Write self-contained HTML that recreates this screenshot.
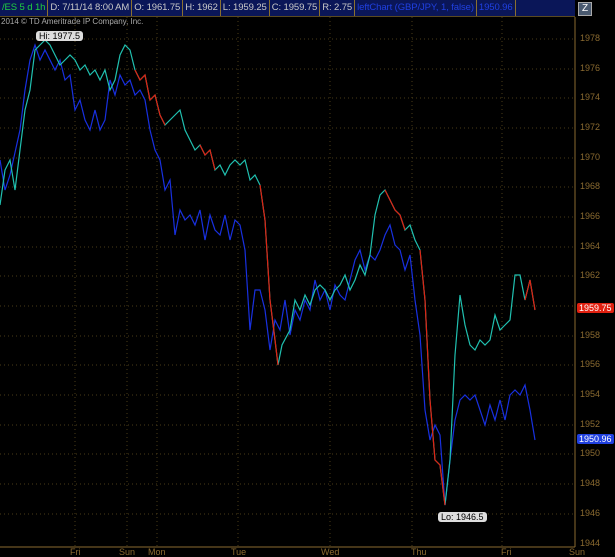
<!DOCTYPE html><html><head><style>
body{margin:0;width:615px;height:557px;background:#000;overflow:hidden;font-family:"Liberation Sans",sans-serif;position:relative}
.hdr{position:absolute;left:0;top:0;width:575px;height:16px;background:#0a1658;border-bottom:1px solid #5a4a20;font-size:9.5px;line-height:16px;color:#c8c8c8;white-space:nowrap;letter-spacing:-0.1px}
.hdr span{display:inline-block;padding:0 2px;border-right:1px solid #8a7030}
.ax{position:absolute;color:#8a6a30;font-size:9px}
</style></head><body>
<div class="hdr"><span style="color:#20d040">/ES 5 d 1h</span><span>D: 7/11/14 8:00 AM</span><span>O: 1961.75</span><span>H: 1962</span><span>L: 1959.25</span><span>C: 1959.75</span><span>R: 2.75</span><span style="color:#2040e0">leftChart (GBP/JPY, 1, false)</span><span style="color:#2040e0">1950.96</span></div>
<div style="position:absolute;left:578px;top:2px;width:12px;height:12px;background:#4a5a70;border:1px solid #aaa;color:#fff;font-size:10px;line-height:12px;text-align:center">Z</div>
<div style="position:absolute;left:1px;top:17px;font-size:8px;color:#aaa">2014 © TD Ameritrade IP Company, Inc.</div>
<svg width="615" height="557" style="position:absolute;left:0;top:0">
<g stroke="#4a3c18" stroke-dasharray="1,3" stroke-width="1">
<line x1="0" y1="39" x2="575" y2="39"/><line x1="0" y1="69" x2="575" y2="69"/><line x1="0" y1="98" x2="575" y2="98"/><line x1="0" y1="128" x2="575" y2="128"/><line x1="0" y1="158" x2="575" y2="158"/><line x1="0" y1="187" x2="575" y2="187"/><line x1="0" y1="217" x2="575" y2="217"/><line x1="0" y1="247" x2="575" y2="247"/><line x1="0" y1="276" x2="575" y2="276"/><line x1="0" y1="306" x2="575" y2="306"/><line x1="0" y1="336" x2="575" y2="336"/><line x1="0" y1="365" x2="575" y2="365"/><line x1="0" y1="395" x2="575" y2="395"/><line x1="0" y1="425" x2="575" y2="425"/><line x1="0" y1="454" x2="575" y2="454"/><line x1="0" y1="484" x2="575" y2="484"/><line x1="0" y1="514" x2="575" y2="514"/>
<line x1="75" y1="17" x2="75" y2="546"/><line x1="127" y1="17" x2="127" y2="546"/><line x1="157" y1="17" x2="157" y2="546"/><line x1="238" y1="17" x2="238" y2="546"/><line x1="330" y1="17" x2="330" y2="546"/><line x1="412" y1="17" x2="412" y2="546"/><line x1="502" y1="17" x2="502" y2="546"/>
</g>
<line x1="575" y1="17" x2="575" y2="547" stroke="#8a6a30"/>
<line x1="0" y1="547" x2="575" y2="547" stroke="#8a6a30"/>
<polyline fill="none" stroke="#1830e0" stroke-width="1.2" points="0,160 5,190 10,175 20,130 25,90 30,60 35,45 40,60 45,50 55,70 60,60 65,80 70,75 75,110 80,100 85,120 90,130 95,110 100,130 105,120 110,80 115,95 120,75 125,85 130,80 135,95 140,90 145,100 150,130 155,150 160,160 165,190 170,180 175,235 180,210 185,220 190,215 195,225 200,210 205,240 210,215 215,230 220,235 225,215 230,240 235,220 240,225 245,250 250,330 255,290 260,290 265,310 270,350 275,320 280,330 285,300 290,335 295,310 300,320 305,300 310,310 315,280 320,300 325,290 330,310 335,285 340,295 345,300 350,280 355,260 360,250 365,270 370,255 375,260 380,250 385,235 390,225 395,245 400,250 405,270 410,255 415,300 420,335 425,410 430,440 435,425 440,435 445,505 450,460 455,420 460,400 465,395 470,400 475,395 480,410 485,425 490,405 495,420 500,400 505,420 510,395 515,390 520,395 525,385 530,410 535,440"/>
<polyline fill="none" stroke="#20c0b0" stroke-width="1.2" points="0,205 5,170 10,160 15,190 20,150 25,110 30,90 35,50 40,45 45,40 50,45 55,55 60,65 65,60 70,55 75,60 80,70 85,65 90,75 95,70 100,80 105,70 110,90 115,80 120,55 125,45 130,50 135,70 140,80 145,75 150,100 155,95 160,115 165,125 170,120 175,115 180,110 185,130 190,140 195,150 200,145 205,155 210,150 215,170 220,165 225,175 230,165 235,160 240,165 245,160 250,180 255,175 260,185 265,220 270,300 275,340 278,365 282,345 290,330 295,300 300,310 305,295 310,305 315,290 320,285 325,290 330,300 335,290 340,285 345,275 350,290 355,280 360,265 365,275 370,255 375,215 380,195 385,190 390,200 395,210 400,215 405,230 410,225 415,240 420,250 425,300 430,400 435,460 440,465 445,505 450,460 455,355 460,295 465,325 470,345 475,350 480,340 485,345 490,340 495,315 500,330 505,325 510,320 515,275 520,275 525,300 530,280 535,310"/>
<polyline fill="none" stroke="#e02010" stroke-width="1.2" points="135,70 140,80 145,75 150,100 155,95 160,115 165,125"/>
<polyline fill="none" stroke="#e02010" stroke-width="1.2" points="200,145 205,155 210,150 215,170"/>
<polyline fill="none" stroke="#e02010" stroke-width="1.2" points="260,185 265,220 270,300 275,340 278,365"/>
<polyline fill="none" stroke="#e02010" stroke-width="1.2" points="385,190 390,200 395,210 400,215 405,230"/>
<polyline fill="none" stroke="#e02010" stroke-width="1.2" points="420,250 425,300 430,400 435,460 440,465 445,505"/>
<polyline fill="none" stroke="#e02010" stroke-width="1.2" points="525,300 530,280 535,310"/>
</svg>
<div style="position:absolute;left:36px;top:31px;background:#ddd;color:#000;font-size:9px;padding:0 3px;border-radius:3px">Hi: 1977.5</div>
<div style="position:absolute;left:438px;top:512px;background:#ddd;color:#000;font-size:9px;padding:0 3px;border-radius:3px">Lo: 1946.5</div>
<div style="position:absolute;left:577px;top:303px;background:#e02010;color:#fff;font-size:9px;padding:0 2px;border-radius:2px">1959.75</div>
<div style="position:absolute;left:577px;top:434px;background:#2040e0;color:#fff;font-size:9px;padding:0 2px;border-radius:2px">1950.96</div>
<div class="ax" style="left:580px;top:33px">1978</div><div class="ax" style="left:580px;top:63px">1976</div><div class="ax" style="left:580px;top:92px">1974</div><div class="ax" style="left:580px;top:122px">1972</div><div class="ax" style="left:580px;top:152px">1970</div><div class="ax" style="left:580px;top:181px">1968</div><div class="ax" style="left:580px;top:211px">1966</div><div class="ax" style="left:580px;top:241px">1964</div><div class="ax" style="left:580px;top:270px">1962</div><div class="ax" style="left:580px;top:330px">1958</div><div class="ax" style="left:580px;top:359px">1956</div><div class="ax" style="left:580px;top:389px">1954</div><div class="ax" style="left:580px;top:419px">1952</div><div class="ax" style="left:580px;top:448px">1950</div><div class="ax" style="left:580px;top:478px">1948</div><div class="ax" style="left:580px;top:508px">1946</div><div class="ax" style="left:580px;top:538px">1944</div>
<div class="ax" style="left:70px;top:547px">Fri</div><div class="ax" style="left:119px;top:547px">Sun</div><div class="ax" style="left:148px;top:547px">Mon</div><div class="ax" style="left:231px;top:547px">Tue</div><div class="ax" style="left:321px;top:547px">Wed</div><div class="ax" style="left:411px;top:547px">Thu</div><div class="ax" style="left:501px;top:547px">Fri</div><div class="ax" style="left:569px;top:547px">Sun</div>
</body></html>
